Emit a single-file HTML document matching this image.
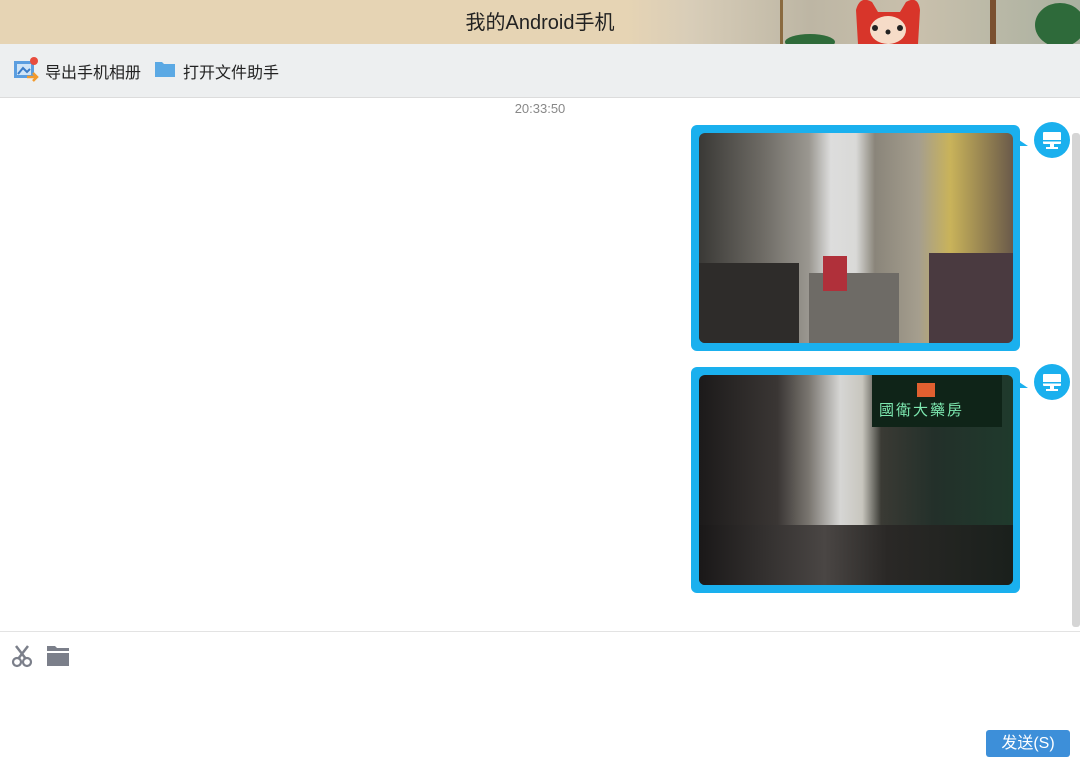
<!DOCTYPE html>
<html><head><meta charset="utf-8"><style>
*{margin:0;padding:0;box-sizing:border-box}
body{width:1080px;height:767px;overflow:hidden;background:#fff;font-family:"Liberation Sans","Noto Sans CJK SC",sans-serif;position:relative}
.hdr{position:absolute;left:0;top:0;width:1080px;height:44px;background:linear-gradient(90deg,#e6d4b4 0%,#e6d4b4 58%,#d8cdb8 64%,#bdb6a4 75%,#c9c0ac 85%,#a9b0a0 100%)}
.hdr .t{position:absolute;left:0;width:1080px;text-align:center;top:6px;font-size:20px;color:#222}
.tb{position:absolute;top:44px;left:0;width:1080px;height:54px;background:#edeff0;border-bottom:1px solid #dcdcdc}
.tb span{position:absolute;top:15px;font-size:16px;color:#222}
.time{position:absolute;top:101px;left:0;width:1080px;text-align:center;font-size:13px;color:#888}
.bub{position:absolute;left:691px;width:329px;height:226px;background:#1ab0ee;border-radius:6px}
.bub .img{position:absolute;left:8px;top:8px;width:314px;height:210px;border-radius:6px;overflow:hidden}
.av{position:absolute;left:1034px;width:36px;height:36px;border-radius:50%;background:#1ab0ee}
.tail{position:absolute;left:1019px;width:0;height:0;border-left:9px solid #1ab0ee;border-top:6px solid transparent}
.sb{position:absolute;left:1072px;top:133px;width:8px;height:494px;background:#d5d5d5;border-radius:3px}
.line{position:absolute;top:631px;left:0;width:1080px;height:1px;background:#e3e3e3}
.send{position:absolute;left:986px;top:730px;width:84px;height:27px;background:#3d8fd9;border-radius:3px;color:#fff;font-size:16px;text-align:center;line-height:27px}
</style></head><body>
<div class="hdr">
<svg width="1080" height="44" style="position:absolute;left:0;top:0">
<rect x="780" y="0" width="3" height="44" fill="#8a6a40"/>
<ellipse cx="810" cy="42" rx="25" ry="8" fill="#2f6b3a"/>
<path d="M858 44 L856 10 Q860 -5 872 2 L878 12 L900 12 L906 2 Q918 -5 920 10 L918 44Z" fill="#d8352a"/>
<ellipse cx="888" cy="30" rx="18" ry="14" fill="#f6dcc8"/>
<circle cx="875" cy="28" r="3" fill="#222"/><circle cx="900" cy="28" r="3" fill="#222"/><circle cx="888" cy="32" r="2.5" fill="#222"/>
<rect x="990" y="0" width="6" height="44" fill="#7a5030"/>
<ellipse cx="1060" cy="25" rx="25" ry="22" fill="#2e6a3a"/>
</svg>
<div class="t">我的Android手机</div></div>
<div class="tb">
<svg style="position:absolute;left:13px;top:13px" width="26" height="26"><rect x="1" y="4" width="20" height="17" fill="#5b9ee0"/><rect x="4" y="7" width="14" height="11" fill="#cfe4f7"/><path d="M5 17 L10 11 L14 15 L17 12" stroke="#3a7cc8" stroke-width="2" fill="none"/><circle cx="21" cy="4" r="4" fill="#e84c3d"/><path d="M14 20 L24 20 M20 16 L24 20 L20 24" stroke="#f29a2e" stroke-width="2.5" fill="none"/></svg>
<span style="left:45px">导出手机相册</span>
<svg style="position:absolute;left:155px;top:16px" width="20" height="18"><path d="M0 2 L7 2 L9 4 L20 4 L20 17 L0 17Z" fill="#5ba9e4"/></svg>
<span style="left:183px">打开文件助手</span></div>
<div class="time">20:33:50</div>
<div class="bub" style="top:125px"><div class="img" style="background:linear-gradient(90deg,#3a3936 0%,#6d6a64 20%,#9a9790 35%,#ddd 42%,#d9d9d7 50%,#8a857a 56%,#a59e8e 70%,#c9b35a 80%,#6a5a4a 100%)">
<div style="position:absolute;left:110px;top:140px;width:90px;height:70px;background:#6e6b66"></div>
<div style="position:absolute;left:0;top:130px;width:100px;height:80px;background:#2e2c2a"></div>
<div style="position:absolute;left:124px;top:123px;width:24px;height:35px;background:#b0303a"></div>
<div style="position:absolute;left:230px;top:120px;width:84px;height:90px;background:#4a3a40"></div>
</div></div>
<div class="tail" style="top:140px"></div>
<div class="av" style="top:122px"><svg width="36" height="36"><rect x="9" y="10" width="18" height="12" rx="1" fill="#fff"/><rect x="9" y="18" width="18" height="1.5" fill="#1ab0ee"/><rect x="16" y="22" width="4" height="3" fill="#fff"/><rect x="12" y="25" width="12" height="2" fill="#fff"/></svg></div>
<div class="bub" style="top:367px"><div class="img" style="background:linear-gradient(90deg,#1c1a1a 0%,#3a3634 25%,#7a7670 35%,#d6d6d4 45%,#c8c6be 52%,#3a3a34 58%,#23302a 75%,#1f3a2c 100%)">
<div style="position:absolute;left:173px;top:0;width:130px;height:52px;background:#0f2418"></div>
<div style="position:absolute;left:180px;top:24px;font-size:15px;color:#7de8b0;letter-spacing:2px;font-family:'Noto Sans CJK TC',sans-serif">國衛大藥房</div>
<div style="position:absolute;left:218px;top:8px;width:18px;height:14px;background:#e06030"></div>
<div style="position:absolute;left:0;top:150px;width:314px;height:60px;background:linear-gradient(90deg,#1a1818,#4a4644 40%,#2a2826 60%,#1a201c)"></div>
</div></div>
<div class="tail" style="top:382px"></div>
<div class="av" style="top:364px"><svg width="36" height="36"><rect x="9" y="10" width="18" height="12" rx="1" fill="#fff"/><rect x="9" y="18" width="18" height="1.5" fill="#1ab0ee"/><rect x="16" y="22" width="4" height="3" fill="#fff"/><rect x="12" y="25" width="12" height="2" fill="#fff"/></svg></div>
<div class="sb"></div>
<div class="line"></div>
<svg style="position:absolute;left:10px;top:644px" width="26" height="24"><path d="M6 2 L16 15 M18 2 L8 15" stroke="#7b7f8a" stroke-width="2.5"/><circle cx="7" cy="18" r="4" stroke="#7b7f8a" stroke-width="2.2" fill="none"/><circle cx="17" cy="18" r="4" stroke="#7b7f8a" stroke-width="2.2" fill="none"/></svg>
<svg style="position:absolute;left:46px;top:645px" width="26" height="22"><path d="M1 1 L9 1 L11 3 L23 3 L23 6 L1 6Z M1 8 L23 8 L23 21 L1 21Z" fill="#7b7f8a"/></svg>
<div class="send">发送(S)</div>
</body></html>
